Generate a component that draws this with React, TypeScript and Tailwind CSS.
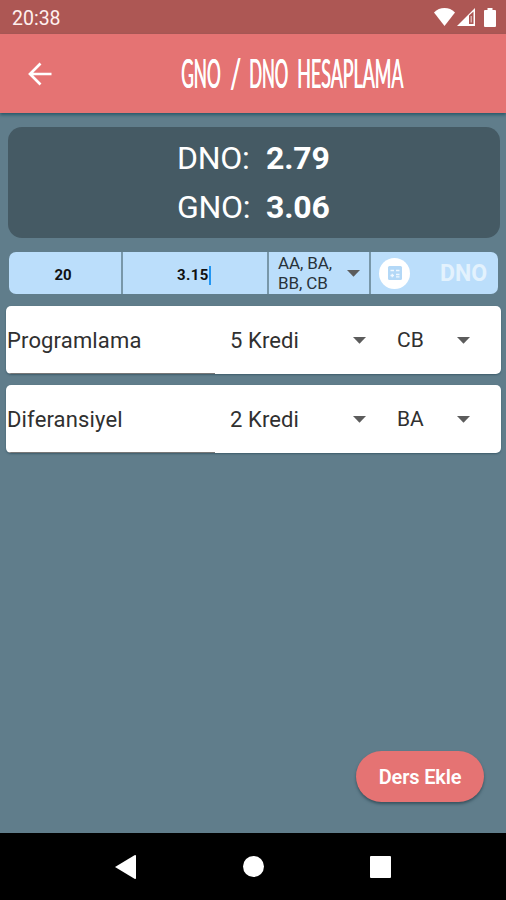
import React from 'react';

interface Course {
  name: string;
  credit: string;
  grade: string;
}

const courses: Course[] = [
  { name: 'Programlama', credit: '5 Kredi', grade: 'CB' },
  { name: 'Diferansiyel', credit: '2 Kredi', grade: 'BA' },
];

const Caret: React.FC = () => (
  <svg width="13" height="7" viewBox="0 0 13 7" className="shrink-0">
    <path d="M0 0h13L6.5 6.7z" fill="#5c5c5c" />
  </svg>
);

const StatusBar: React.FC = () => (
  <div className="h-[34px] shrink-0 bg-[#ad5754] flex items-center justify-between pl-3 pr-2.5 text-white">
    <span className="text-[19.5px] leading-none pt-[3px] text-[#fff0ee]">20:38</span>
    <div className="flex items-center">
      {/* Wifi */}
      <svg width="21" height="18" viewBox="0 0 21 18" fill="currentColor">
        <path d="M0 4.5C3 1.2 6.500 0 10.500 0S18 1.200 21 4.500L10.500 18z" />
      </svg>
      {/* Signal */}
      <svg width="18" height="18" viewBox="0 0 18 18" className="ml-[2px]">
        <path d="M18 0v18H0z" fill="currentColor" />
        <path d="M12 7.500L16.500 3.500v12.500H12z" fill="#ad5754" />
        <path d="M13.500 8h1.500v6.500h-1.500z" fill="#d9aeac" />
      </svg>
      {/* Battery */}
      <svg width="12" height="19" viewBox="0 0 12 19" fill="currentColor" className="ml-[9px]">
        <path d="M3.500 0h5v2H11q1 0 1 1v15q0 1-1 1H1q-1 0-1-1V3q0-1 1-1h2.500z" />
      </svg>
    </div>
  </div>
);

const AppBar: React.FC = () => (
  <header className="h-[79px] shrink-0 bg-[#e57373] flex items-center text-white relative shadow-[0_2px_3px_#285a6a]">
    <svg width="24" height="24" viewBox="0 0 24 24" fill="none" stroke="currentColor" strokeWidth="2.700" className="ml-7">
      <path d="M23.500 12H2M12.500 1.500L2 12l10.500 10.500" />
    </svg>
    {/* Narrow display lettering, one box per word */}
    <h1 className="ml-[129px] pb-[2px] flex whitespace-nowrap text-[40px] leading-none font-[Lato,sans-serif] [text-shadow:1px_0_0_currentColor]">
      <span className="w-[49px]"><span className="inline-block origin-left scale-x-[0.430]">GNO</span></span>{' '}
      <span className="w-[19px]"><span className="inline-block origin-left scale-x-[0.600]">/</span></span>{' '}
      <span className="w-[48px]"><span className="inline-block origin-left scale-x-[0.420]">DNO</span></span>{' '}
      <span className="w-[105px]"><span className="inline-block origin-left scale-x-[0.447]">HESAPLAMA</span></span>
    </h1>
  </header>
);

const Averages: React.FC = () => (
  <section className="ml-2 mt-[14px] mr-[6px] h-[111px] rounded-[14px] bg-[#455a64] text-white text-[32px] leading-[49px] pt-[7px]">
    {[['DNO:', '2.79'], ['GNO:', '3.06']].map(([label, value]) => (
      <div key={label} className="flex">
        <span className="ml-[169px] w-[89px] tracking-[-0.300px]">{label}</span>
        <span className="font-bold tracking-[-0.200px]">{value}</span>
      </div>
    ))}
  </section>
);

const Filters: React.FC = () => (
  <section className="ml-[9px] mr-[8px] mt-[14px] h-[42px] flex rounded-[7px] bg-[#bbdefb] overflow-hidden text-[#111]">
    <div className="w-[114px] border-r-2 border-[#7897a9] flex items-center justify-center pt-[4px] pr-1 text-[15px] font-bold">20</div>
    <div className="w-[146px] border-r-2 border-[#7897a9] flex items-center justify-center pt-[4px] pr-[2px] text-[15px] font-bold">
      <span className="tracking-[0.400px]">3.15</span>
      <span className="w-[2px] h-[19px] bg-[#2196f3]" />
    </div>
    <div className="w-[102px] border-r-2 border-[#7897a9] flex items-center justify-between pl-[9px] pr-[9px]">
      <span className="text-[17px] leading-[20px] tracking-[-0.100px] text-[#28323a]">AA, BA,<br />BB, CB</span>
      <Caret />
    </div>
    <div className="flex-1 flex items-center justify-between pl-[8px] pr-[11px]">
      <div className="w-[31px] h-[31px] rounded-full bg-white flex items-center justify-center">
        <svg width="16" height="16" viewBox="0 0 16 16">
          <rect x="1" y="1" width="14" height="14" rx="1.500" fill="#b3d8f7" />
          <path d="M3.500 5.500h3.500M9 5.500h3.500M3.500 10.500h3.500M5.250 8.750v3.500M9 9.500h3.500M9 11.800h3.500" stroke="#f0f8ff" strokeWidth="1.300" />
        </svg>
      </div>
      <span className="text-[23px] font-bold leading-none text-[#e3f2fd]">DNO</span>
    </div>
  </section>
);

const CourseRow: React.FC<{ course: Course }> = ({ course }) => (
  <div className="h-[68px] rounded-[5px] bg-white overflow-hidden flex items-center text-[22px] text-[#303030] shadow-[0_1px_2px_#3d5c6b]">
    <div className="w-[209px] h-full border-b border-[#777] flex items-center pt-px pl-px tracking-[0.150px]">{course.name}</div>
    <div className="w-[151px] pl-[15px] flex items-center justify-between">
      <span className="tracking-[0.100px]">{course.credit}</span>
      <Caret />
    </div>
    <div className="w-[104px] pl-[31px] flex items-center justify-between">
      <span className="text-[21px] pt-[2px]">{course.grade}</span>
      <Caret />
    </div>
  </div>
);

const NavBar: React.FC = () => (
  <nav className="h-[67px] shrink-0 bg-black flex items-center text-white">
    <svg width="21" height="24" viewBox="0 0 21 24" fill="currentColor" className="ml-[115px]">
      <path d="M0 12L19.500.300Q21-.300 21 1v22q0 1.300-1.500.700z" />
    </svg>
    <div className="ml-[107px] w-[21px] h-[21px] rounded-full bg-white" />
    <div className="ml-[106px] w-[21px] h-[22px] rounded-[1px] bg-white" />
  </nav>
);

const App: React.FC = () => {
  return (
    <div className="w-full h-[900px] bg-[#607d8b] flex flex-col overflow-hidden font-[Roboto,sans-serif]">
      <StatusBar />
      <AppBar />
      <Averages />
      <Filters />
      <main className="flex-1 ml-[6px] mr-[5px] mt-[12px] flex flex-col gap-[11px]">
        {courses.map((course) => (
          <CourseRow key={course.name} course={course} />
        ))}
      </main>
      <div className="flex justify-end pr-[22px] pb-[31px]">
        <button className="w-[128px] h-[51px] rounded-full bg-[#e57373] text-white text-[20px] tracking-[-0.150px] font-semibold shadow-[0_2px_3px_#38535f]">
          Ders Ekle
        </button>
      </div>
      <NavBar />
    </div>
  );
};

export default App;
